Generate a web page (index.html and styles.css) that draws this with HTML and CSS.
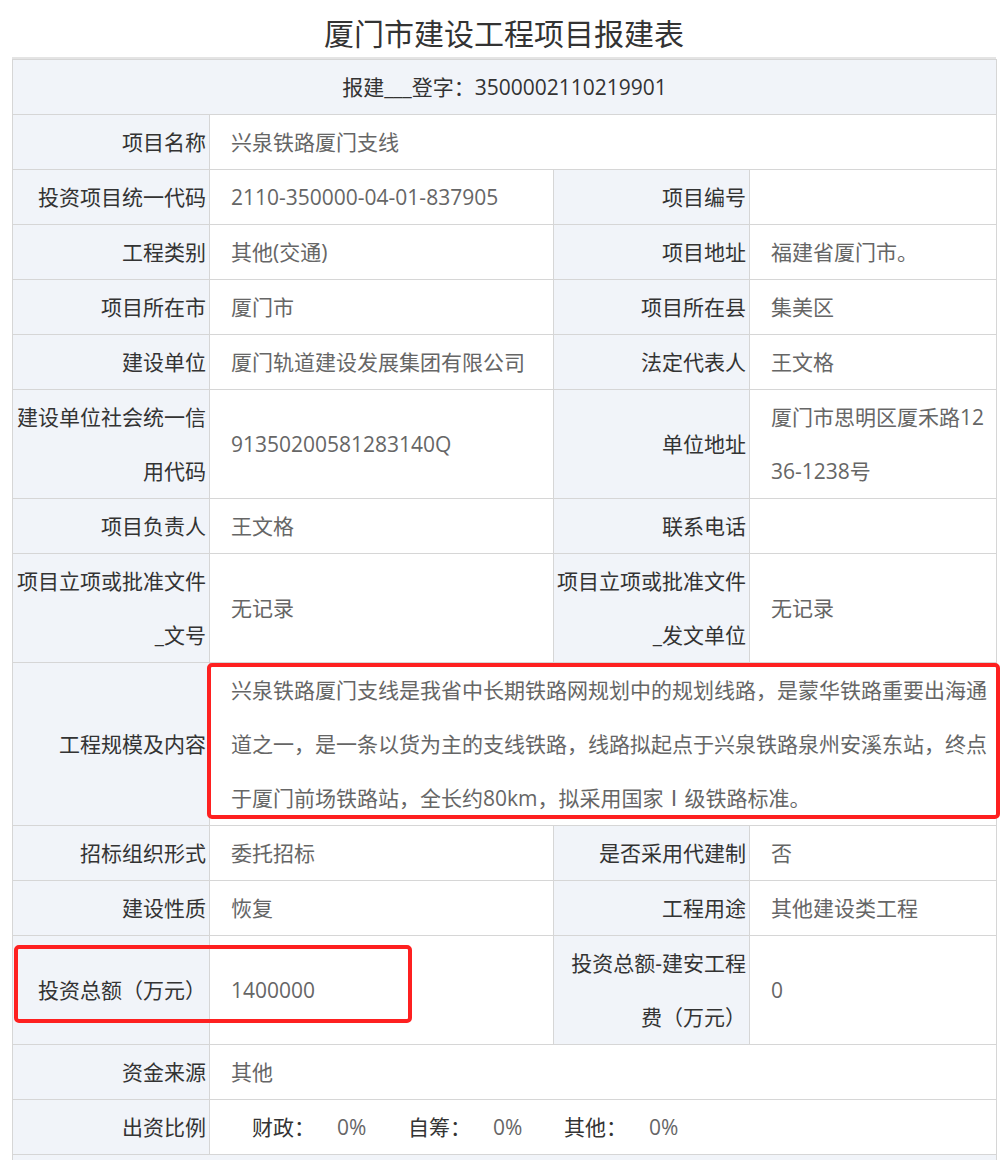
FILE: index.html
```html
<!DOCTYPE html>
<html lang="zh-CN">
<head>
    <meta charset="UTF-8">
    <meta name="viewport" content="width=device-width, initial-scale=1.0">
    <title>厦门市建设工程项目报建表</title>
    <link rel="stylesheet" href="styles.css">
</head>
<body>
    <div class="page">
        <h1 class="title">厦门市建设工程项目报建表</h1>

        <div class="sheet">
            <table class="report">
                <colgroup>
                    <col class="col-label">
                    <col class="col-value">
                    <col class="col-label-right">
                    <col class="col-value-right">
                </colgroup>
                <tr>
                    <th colspan="4" class="head">报建___登字：3500002110219901</th>
                </tr>
                <tr>
                    <td class="label">项目名称</td>
                    <td class="value" colspan="3">兴泉铁路厦门支线</td>
                </tr>
                <tr>
                    <td class="label">投资项目统一代码</td>
                    <td class="value">2110-350000-04-01-837905</td>
                    <td class="label">项目编号</td>
                    <td class="value"></td>
                </tr>
                <tr>
                    <td class="label">工程类别</td>
                    <td class="value">其他(交通)</td>
                    <td class="label">项目地址</td>
                    <td class="value">福建省厦门市。</td>
                </tr>
                <tr>
                    <td class="label">项目所在市</td>
                    <td class="value">厦门市</td>
                    <td class="label">项目所在县</td>
                    <td class="value">集美区</td>
                </tr>
                <tr>
                    <td class="label">建设单位</td>
                    <td class="value">厦门轨道建设发展集团有限公司</td>
                    <td class="label">法定代表人</td>
                    <td class="value">王文格</td>
                </tr>
                <tr>
                    <td class="label">建设单位社会统一信用代码</td>
                    <td class="value">91350200581283140Q</td>
                    <td class="label">单位地址</td>
                    <td class="value">厦门市思明区厦禾路1236-1238号</td>
                </tr>
                <tr>
                    <td class="label">项目负责人</td>
                    <td class="value">王文格</td>
                    <td class="label">联系电话</td>
                    <td class="value"></td>
                </tr>
                <tr>
                    <td class="label">项目立项或批准文件_文号</td>
                    <td class="value">无记录</td>
                    <td class="label">项目立项或批准文件_发文单位</td>
                    <td class="value">无记录</td>
                </tr>
                <tr>
                    <td class="label">工程规模及内容</td>
                    <td class="value" colspan="3">兴泉铁路厦门支线是我省中长期铁路网规划中的规划线路，是蒙华铁路重要出海通道之一，是一条以货为主的支线铁路，线路拟起点于兴泉铁路泉州安溪东站，终点于厦门前场铁路站，全长约80km，拟采用国家Ⅰ级铁路标准。</td>
                </tr>
                <tr>
                    <td class="label">招标组织形式</td>
                    <td class="value">委托招标</td>
                    <td class="label">是否采用代建制</td>
                    <td class="value">否</td>
                </tr>
                <tr>
                    <td class="label">建设性质</td>
                    <td class="value">恢复</td>
                    <td class="label">工程用途</td>
                    <td class="value">其他建设类工程</td>
                </tr>
                <tr>
                    <td class="label">投资总额（万元）</td>
                    <td class="value">1400000</td>
                    <td class="label">投资总额-建安工程费（万元）</td>
                    <td class="value">0</td>
                </tr>
                <tr>
                    <td class="label">资金来源</td>
                    <td class="value" colspan="3">其他</td>
                </tr>
                <tr>
                    <td class="label">出资比例</td>
                    <td class="value" colspan="3">
                        <span class="ratio"><span class="ratio-name">财政：</span><span class="ratio-num">0%</span></span><span class="ratio"><span class="ratio-name">自筹：</span><span class="ratio-num">0%</span></span><span class="ratio"><span class="ratio-name">其他：</span><span class="ratio-num">0%</span></span>
                    </td>
                </tr>
                <tr>
                    <td class="label blank" colspan="4"></td>
                </tr>
            </table>
        </div>

        <!-- red annotation boxes -->
        <div class="mark mark-scope"></div>
        <div class="mark mark-total"></div>
    </div>
</body>
</html>
```

FILE: styles.css
```css
/* General Styles */
body {
    font-family: "Open Sans", "Noto Sans CJK SC", sans-serif;
    margin: 0;
    padding: 0;
    background-color: #fff;
    color: #333;
}

.page {
    position: relative;
    width: 984px;
    padding-left: 12px;
}

/* Title */
.title {
    margin: 0;
    padding: 14px 0 3px;
    font-size: 30px;
    font-weight: normal;
    line-height: 40px;
    text-align: center;
    color: #333;
}

/* Report Table */
.sheet {
    border-top: 2px solid #e4e4e4;
}

.report {
    width: 984px;
    table-layout: fixed;
    border-collapse: collapse;
    font-size: 21px;
    line-height: 54px;
}

.col-label {
    width: 197px;
}

.col-value {
    width: 344px;
}

.col-label-right {
    width: 196px;
}

.col-value-right {
    width: 247px;
}

.report th,
.report td {
    border: 1px solid #d6d6d6;
    padding: 0;
    vertical-align: middle;
}

.head {
    background-color: #f1f4f9;
    font-weight: normal;
    text-align: center;
    color: #333;
}

.label {
    background-color: #f1f4f9;
    text-align: right;
    padding: 0 3px 0 2px !important;
    color: #333;
}

.value {
    padding: 0 8px 0 21px !important;
    color: #666;
    word-break: break-all;
}

.blank {
    height: 54px;
}

/* Funding ratio row */
.ratio {
    display: inline-block;
    margin-left: 21px;
}

.ratio-name {
    color: #333;
}

.ratio-num {
    display: inline-block;
    width: 50px;
    padding-left: 22px;
}

/* Annotation boxes */
.mark {
    position: absolute;
    border: 4px solid #fe2020;
    border-radius: 5px;
    box-sizing: border-box;
}

.mark-scope {
    left: 207px;
    top: 663px;
    width: 793px;
    height: 156px;
}

.mark-total {
    left: 14px;
    top: 945px;
    width: 398px;
    height: 78px;
}
```
